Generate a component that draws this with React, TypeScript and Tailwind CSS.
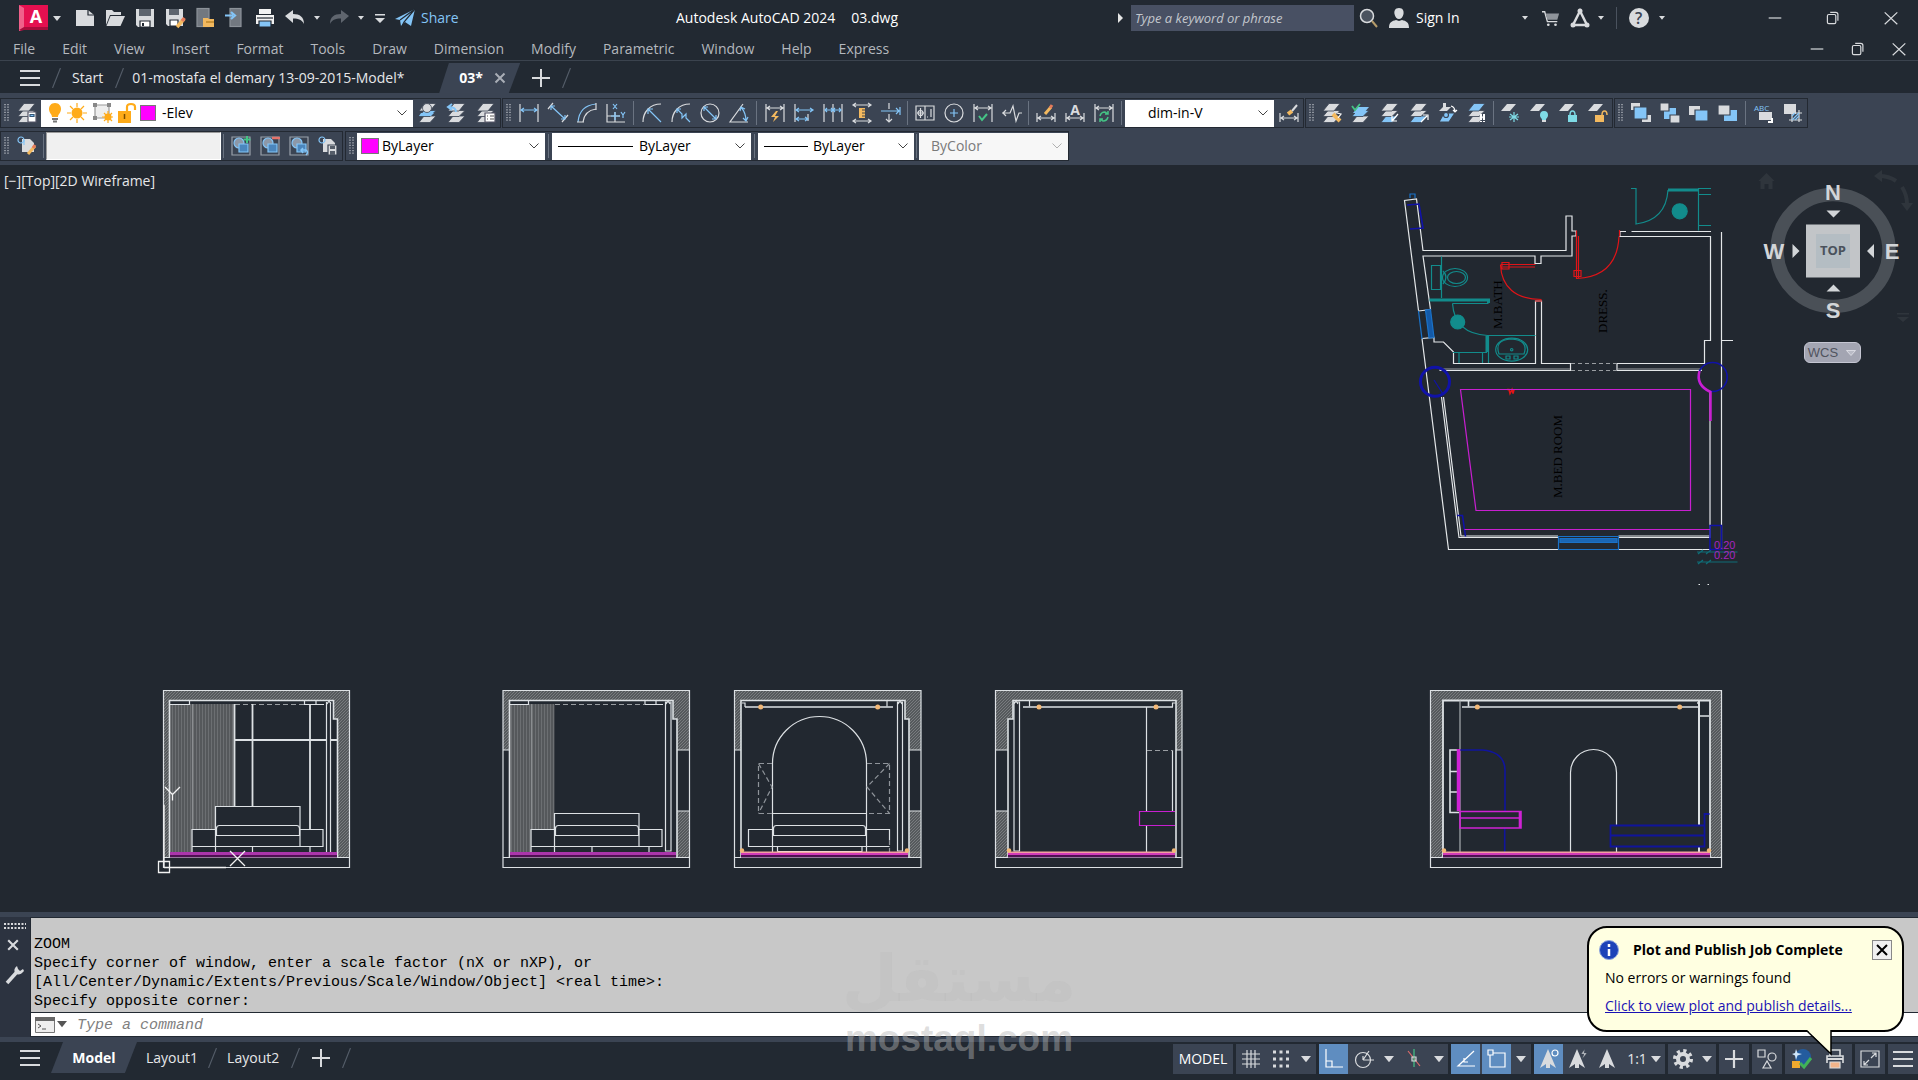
import type { ReactNode } from 'react';

const W = '#d9dbde';
const B = '#84c5f7';
const Y = '#f3b95f';
const G = '#45c486';
const C = '#7fdbe6';

interface IconProps {
  children: ReactNode;
  className?: string;
}

function Icon({ children, className = 'h-5 w-5' }: IconProps) {
  return (
    <svg
      viewBox="0 0 20 20"
      className={`${className} shrink-0 overflow-visible`}
      fill="none"
      stroke={W}
      strokeWidth="1.2"
      aria-hidden="true"
    >
      {children}
    </svg>
  );
}

function Stack({ a = W, b = W, c = W }: { a?: string; b?: string; c?: string }) {
  return (
    <g stroke="#3b4453" strokeWidth="0.8">
      <path d="M6 13h12l-6 6.500H1z" fill={c} />
      <path d="M6 7.500h12l-6 6H1z" fill={b} />
      <path d="M7 .5h11l-6 7.500H1z" fill={a} />
    </g>
  );
}

function Caret({ className = 'w-2' }: { className?: string }) {
  return (
    <svg viewBox="0 0 8 5" className={`${className} shrink-0`} aria-hidden="true">
      <path d="M0 0h8L4 5z" fill="#d9dbde" />
    </svg>
  );
}

function Chevron({ color = '#444' }: { color?: string }) {
  return (
    <svg viewBox="0 0 10 6" className="pointer-events-none mr-1.5 w-2.5 shrink-0" fill="none" stroke={color}>
      <path d="M.5 .5 5 5 9.500.5" />
    </svg>
  );
}

function Grip() {
  return (
    <svg viewBox="0 0 6 18" className="mr-0.5 ml-[3px] h-[18px] w-1.5 shrink-0" aria-hidden="true">
      <path
        d="M1 0v18M4 0v18"
        stroke="#c3c7cd"
        strokeWidth="1.2"
        strokeDasharray="1.2 1.4"
      />
    </svg>
  );
}

function Separator({ className = 'mx-px' }: { className?: string }) {
  return <span className={`${className} h-6 w-px shrink-0 bg-[#6a7381]`} />;
}

interface ToolProps {
  label: string;
  children: ReactNode;
}

function Tool({ label, children }: ToolProps) {
  return (
    <button aria-label={label} className="flex h-[26px] w-[29px] shrink-0 items-center justify-center">
      <Icon>{children}</Icon>
    </button>
  );
}

function Panel({ children }: { children: ReactNode }) {
  return (
    <div className="flex h-[30px] shrink-0 items-center border border-[#232932] bg-[#3b4453]">{children}</div>
  );
}

// linear dimension with arrows, shared by several dimension tools
function DimBase() {
  return <path d="M1 1v18M19 1v18M2 5h16M5 3 2 5l3 2M15 3l3 2-3 2" />;
}

function TitleBar() {
  return (
    <header className="flex h-9 items-center">
      <div className="flex w-[456px] shrink-0 items-center pl-[19px]">
        <button aria-label="Application menu" className="flex items-center gap-1">
          <svg viewBox="0 0 30 26" className="h-[26px] w-[30px]">
            <path d="M0 0h29v25H5L0 26z" fill="#e51050" />
            <path d="M0 0 5 3v20l-5 3z" fill="#f0608a" />
            <path d="M5 22h24v3H0z" fill="#a80c3c" />
            <text
              x="17"
              y="18"
              textAnchor="middle"
              fill="#fff"
              className="font-['Open_Sans',sans-serif] text-[18px] font-bold"
            >
              A
            </text>
          </svg>
          <Caret className="w-2" />
        </button>
        <div className="ml-[9px] flex items-center">
          <TitleTool label="New">
            <path d="M1 2h12l6 5v11H1z" fill={W} stroke="none" />
            <path d="M13 2v5h6" stroke="#222932" />
          </TitleTool>
          <TitleTool label="Open">
            <path d="M1 2h6l2 2h7v3H5L1 17z" fill={W} stroke="none" />
            <path d="M5.500 8H20l-4.500 10H1.500z" fill={W} stroke="none" />
          </TitleTool>
          <TitleTool label="Save">
            <path d="M1 1h18v18H3l-2-2z" fill={W} stroke="none" />
            <path d="M4 1h12v7H4z" fill="#5d646e" stroke="none" />
            <path d="M5 13h10v6H5z" fill="#fff" stroke="#222932" />
            <path d="M8 15v3" stroke="#222932" strokeWidth="2" />
          </TitleTool>
          <TitleTool label="Save as">
            <path d="M1 1h17v17H3l-2-2z" fill={W} stroke="none" />
            <path d="M4 1h10v6H4z" fill="#5d646e" stroke="none" />
            <path d="M5 12h8v6H5z" fill="#fff" stroke="#222932" />
            <path d="m12 19 7-8" stroke={Y} strokeWidth="3.500" />
            <path d="m17 13 2.500-3" stroke="#e57b5b" strokeWidth="3.500" />
          </TitleTool>
          <TitleTool label="Open from mobile">
            <rect x="2" y="0.500" width="12" height="18" fill="#727880" stroke="#8c9299" />
            <path d="M8 10h5l1 1h5v8H8z" fill={Y} stroke="none" />
            <path d="M11 14h8" stroke="#b27b1c" />
          </TitleTool>
          <TitleTool label="Save to mobile">
            <rect x="5" y="0.500" width="11" height="18" fill="#727880" stroke="#8c9299" />
            <path d="M0 7.500h8M6 4l4 3.500L6 11" stroke={B} strokeWidth="2.200" />
          </TitleTool>
          <TitleTool label="Plot">
            <path d="M4 1h12v5H4zM1 7h18v9H1z" fill="#f1f1f1" stroke="none" />
            <path d="M2 10h16" stroke="#222932" />
            <path d="M4 13h12v6H4z" fill={B} stroke="#222932" />
          </TitleTool>
          <TitleTool label="Undo">
            <path d="M0 8 8 2v4c7 0 11 3 11 10-2-4-5-5.500-11-5.500V15z" fill={W} stroke="none" />
          </TitleTool>
          <Caret className="mx-1 w-1.5" />
          <TitleTool label="Redo">
            <path d="M20 8 12 2v4C5 6 1 9 1 16c2-4 5-5.500 11-5.500V15z" fill="#5f656e" stroke="none" />
          </TitleTool>
          <Caret className="mx-1 w-1.5" />
          <button aria-label="Customize" className="ml-[7px]">
            <svg viewBox="0 0 10 9" className="w-2.5">
              <path d="M0 0h10v1.500H0zM0 4h10L5 9z" fill={W} />
            </svg>
          </button>
        </div>
        <button className="ml-2.5 flex items-center gap-1.5 text-[#84c5f7]">
          <Icon>
            <path d="M0 11 20 1l-4 17-6-4-4 4-1-6z" fill={B} stroke="none" />
            <path d="M5 12 20 1 9 14l-2 4" stroke="#222932" />
          </Icon>
          Share
        </button>
      </div>
      <h1 className="flex-1 text-center text-white">
        Autodesk AutoCAD 2024<span className="ml-4">03.dwg</span>
      </h1>
      <div className="flex w-[800px] shrink-0 items-center">
        <svg viewBox="0 0 5 10" className="mr-2 w-[5px]">
          <path d="M0 0l5 5-5 5z" fill="#e5e5e5" />
        </svg>
        <input
          aria-label="Search"
          placeholder="Type a keyword or phrase"
          className="h-[26px] w-[223px] bg-[#485063] px-1 text-[13px] italic text-white outline-none placeholder:text-[#c3c7cd]"
        />
        <button aria-label="Search" className="ml-[5px]">
          <Icon>
            <circle cx="8" cy="8" r="6.500" fill="#4b535f" strokeWidth="1.500" />
            <path d="m13 13 5 6" stroke="#b59b6a" strokeWidth="2" />
          </Icon>
        </button>
        <button className="ml-2.5 flex items-center gap-[7px] text-white">
          <Icon>
            <path
              d="M10 0c4 0 5 3 4.500 6S12 11 10 11 6 9 5.500 6 6 0 10 0zM0 20c0-6 3-7 7-8l3 1 3-1c4 1 7 2 7 8z"
              fill={W}
              stroke="none"
            />
          </Icon>
          Sign In
        </button>
        <button aria-label="Account menu" className="ml-[62px]">
          <Caret className="w-1.5" />
        </button>
        <button aria-label="App store" className="ml-3.5">
          <Icon className="h-[18px] w-[18px]">
            <path d="M0 3h3l3 11h11" strokeWidth="1.500" />
            <path d="M4 5h15l-2 7H6z" fill="#8f949b" stroke="none" />
            <circle cx="7" cy="17.500" r="1.500" fill={W} stroke="none" />
            <circle cx="15" cy="17.500" r="1.500" fill={W} stroke="none" />
          </Icon>
        </button>
        <button aria-label="Autodesk connect" className="ml-2.5 flex items-center gap-2">
          <Icon>
            <path d="M10 3 3 17h14z" strokeWidth="2.500" />
            <circle cx="10" cy="3" r="2.500" fill={W} stroke="none" />
            <circle cx="3" cy="17" r="2.500" fill={W} stroke="none" />
            <circle cx="17" cy="17" r="2.500" fill={W} stroke="none" />
          </Icon>
          <Caret className="w-1.5" />
        </button>
        <span className="ml-3 h-[22px] w-px bg-[#4a525e]" />
        <button aria-label="Help" className="ml-3 flex items-center gap-2.5">
          <span className="flex h-5 w-5 items-center justify-center rounded-full bg-[#d9dbde] text-[16px] leading-5 font-semibold text-[#3b4453]">
            ?
          </span>
          <Caret className="w-1.5" />
        </button>
        <WindowControls className="mr-5 gap-11" />
      </div>
    </header>
  );
}

function TitleTool({ label, children }: ToolProps) {
  return (
    <button aria-label={label} className="flex h-6 w-[30px] shrink-0 items-center justify-center">
      <Icon>{children}</Icon>
    </button>
  );
}

function WindowControls({ className }: { className: string }) {
  return (
    <div className={`ml-auto flex items-center ${className}`}>
      <button aria-label="Minimize">
        <Icon className="h-3.5 w-3.5">
          <path d="M1 10h18" strokeWidth="1.700" />
        </Icon>
      </button>
      <button aria-label="Restore">
        <Icon className="h-3.5 w-3.5">
          <rect x="2" y="5" width="12" height="13" rx="2" strokeWidth="1.700" />
          <path d="M6 2h8q3 0 3 3v9" strokeWidth="1.700" />
        </Icon>
      </button>
      <button aria-label="Close">
        <Icon className="h-3.5 w-3.5">
          <path d="m1 2 18 17M19 2 1 19" strokeWidth="1.700" />
        </Icon>
      </button>
    </div>
  );
}

const menus = [
  'File', 'Edit', 'View', 'Insert', 'Format', 'Tools', 'Draw',
  'Dimension', 'Modify', 'Parametric', 'Window', 'Help', 'Express',
];

function MenuBar() {
  return (
    <nav className="flex h-[25px] items-center border-b border-[#3b434e] pt-0.5 pl-[13px]">
      <div className="flex gap-[27px] text-[#b4b8be]">
        {menus.map((menu) => (
          <button key={menu}>{menu}</button>
        ))}
      </div>
      <WindowControls className="mr-3 gap-[27px]" />
    </nav>
  );
}

function Slash() {
  return (
    <svg viewBox="0 0 9 20" className="h-5 w-[9px] shrink-0" stroke="#545c68" fill="none">
      <path d="M8.500 0 .5 20" strokeWidth="1.200" />
    </svg>
  );
}

function Hamburger() {
  return (
    <Icon>
      <path d="M0 3h20M0 10h20M0 17h20" strokeWidth="2" />
    </Icon>
  );
}

function Plus() {
  return (
    <Icon className="h-[18px] w-[18px]">
      <path d="M10 0v20M0 10h20" strokeWidth="2.200" />
    </Icon>
  );
}

function DocumentTabs() {
  return (
    <div className="flex h-8 items-center pt-0.5 pl-5 text-[#e6e7e9]">
      <button aria-label="File tabs menu">
        <Hamburger />
      </button>
      <div className="ml-3">
        <Slash />
      </div>
      <button className="ml-[11px]">Start</button>
      <div className="ml-3">
        <Slash />
      </div>
      <button className="ml-2 w-[307px] text-left whitespace-nowrap">01-mostafa el demary 13-09-2015-Model*</button>
      <div className="flex h-[30px] w-[81px] items-center gap-3 bg-[#3b4453] pl-5 font-bold text-white [clip-path:polygon(12%_0,100%_0,86%_100%,0_100%)]">
        <button>03*</button>
        <button aria-label="Close tab">
          <Icon className="h-2.5 w-2.5">
            <path d="m1 1 18 18M19 1 1 19" stroke="#a9aeb6" strokeWidth="4" />
          </Icon>
        </button>
      </div>
      <button aria-label="New tab" className="mx-3">
        <Plus />
      </button>
      <Slash />
    </div>
  );
}

interface DropdownProps {
  label: string;
  value: string;
  className: string;
  children?: ReactNode;
  disabled?: boolean;
}

function Dropdown({ label, value, className, children, disabled }: DropdownProps) {
  return (
    <div
      className={`flex h-[27px] shrink-0 items-center text-black ${disabled ? 'bg-[#f7f7f7]' : 'bg-white'} ${className}`}
    >
      {children}
      <select
        aria-label={label}
        disabled={disabled}
        className={`h-full min-w-0 flex-1 appearance-none outline-none ${disabled ? 'text-[#7a7a7a]' : ''}`}
      >
        <option>{value}</option>
      </select>
      <Chevron color={disabled ? '#b0b0b0' : '#444'} />
    </div>
  );
}

function LayerStatus() {
  return (
    <div className="flex items-center">
      <Icon className="mr-0.5 h-5 w-5">
        <path d="M10 0c4 0 6 3 6 6 0 4-3 5-3 8H7c0-3-3-4-3-8 0-3 2-6 6-6z" fill="#ffab19" stroke="none" />
        <path d="M7 16h6M8 18.500h4" stroke="#777" strokeWidth="2" />
      </Icon>
      <Icon className="mr-1.5 h-5 w-5">
        <circle cx="10" cy="10" r="5.500" fill="#ffab19" stroke="none" />
        <path d="M10 0v4M10 16v4M0 10h4M16 10h4M3 3l3 3M14 14l3 3M17 3l-3 3M6 14l-3 3" stroke="#ffab19" />
      </Icon>
      <Icon className="mr-1 h-5 w-5">
        <path d="M2 2h14v13H2z" fill="#eee" stroke="#999" />
        <path d="M0 0h4v4H0zM14 0h4v4h-4zM0 13h4v4H0z" fill="#888" stroke="none" />
        <circle cx="15" cy="14" r="3.500" fill="#ffab19" stroke="none" />
        <path d="M15 8v12M9 14h11M11 10l8 8M19 10l-8 8" stroke="#ffab19" />
      </Icon>
      <Icon className="mr-[3px] h-5 w-5">
        <path d="M1 8h13v12H1z" fill="#ffab19" stroke="none" />
        <path d="M10 8V4q0-3 4-3t4 3v3" stroke="#ffab19" strokeWidth="2.200" />
        <path d="M7.500 11v5" stroke="#7a4d00" strokeWidth="1.500" />
      </Icon>
      <span className="mr-1.5 h-4 w-4 border border-[#777] bg-[#ff00ff]" />
    </div>
  );
}

function DimensionTools() {
  return (
    <>
      <Tool label="Linear">
        <path d="M1 1v18M19 1v18" />
        <path d="M2 7h16M5 5 2 7l3 2M15 5l3 2-3 2" stroke={B} />
      </Tool>
      <Tool label="Aligned">
        <path d="M5 0 0 6M20 12l-6 7" />
        <path d="m3 3 14 13M3 7V3h4M17 12v4h-4" stroke={B} />
      </Tool>
      <Tool label="Arc length">
        <path d="M1 19C2 8 8 2 19 1" stroke={B} />
        <path d="M6 19C7 12 11 7 19 6M0 19h7M19 0v7" />
      </Tool>
      <Tool label="Ordinate">
        <path d="M1 1v18h18M9 9v10M1 13h13" />
        <path d="m7 1 4 5M11 1 7 6M15 9l2 3 2-3M17 12v3M9 9v8M5 13h9" stroke={B} />
      </Tool>
      <Separator className="mx-[3px]" />
      <Tool label="Radius">
        <path d="M1 19C1 9 8 1 19 1" />
        <path d="M6 6 19 19M6 11V6h5" stroke={B} />
      </Tool>
      <Tool label="Jogged">
        <path d="M1 19C1 9 8 1 19 1" />
        <path d="m6 6 5 5v4l4-4v4l4 4M6 10V6h4" stroke={B} />
      </Tool>
      <Tool label="Diameter">
        <circle cx="10" cy="10" r="9" />
        <path d="m4 4 12 12M4 8V4h4M16 12v4h-4" stroke={B} />
      </Tool>
      <Tool label="Angular">
        <path d="M14 1 1 19h18" />
        <path d="M12 4q5 6 5 14M11 8l1-4 4 2M14 15l3 3 2-4" stroke={B} />
      </Tool>
      <Separator className="mx-[3px]" />
      <Tool label="Quick dimension">
        <DimBase />
        <path d="M11 8 6 14h4l-2 5 6-6h-4l3-5z" fill={Y} stroke="none" />
      </Tool>
      <Tool label="Baseline">
        <path d="M1 1v18M14 11v7" />
        <path d="M2 7h17M2 16h12M5 5 2 7l3 2M16 5l3 2-3 2M5 14l-3 2 3 2M11 14l3 2-3 2" stroke={B} />
      </Tool>
      <Tool label="Continue">
        <path d="M1 1v18M10 1v18M19 1v18" />
        <path d="M2 7h16M4 5 2 7l2 2M16 5l2 2-2 2M8 5l4 4M12 5 8 9" stroke={B} />
      </Tool>
      <Tool label="Dimension space">
        <path d="M1 2h18M1 18h18M4 0 1 2l3 2M16 0l3 2-3 2M4 16l-3 2 3 2M16 16l3 2-3 2" />
        <path d="M7 5h6v10H7z" fill={Y} stroke="none" />
        <path d="M10 7h3M10 10h3M10 13h3" stroke="#444" />
      </Tool>
      <Tool label="Dimension break">
        <path d="M8 0v6M8 11v8M5 16l3 3 3-3" />
        <path d="M0 8h18M15 5l3 3-3 3M19 4v8" stroke={B} />
      </Tool>
      <Separator className="mx-0.5" />
      <Tool label="Tolerance">
        <path d="M1 3h18v14H1zM10 3v14M2 10h7M5.500 5v10M12 14h1M16 6v8" />
        <circle cx="5.500" cy="10" r="2.500" />
      </Tool>
      <Tool label="Center mark">
        <circle cx="10" cy="10" r="9" />
        <path d="M10 6v8M6 10h8" stroke={B} />
      </Tool>
      <Tool label="Inspection">
        <DimBase />
        <path d="m6 13 3 4 5-6" stroke={G} strokeWidth="2" />
      </Tool>
      <Tool label="Jogged linear">
        <path d="M0 10h8l3-7 3 15 3-8h3M4 7l-3 3 3 3" />
      </Tool>
      <Separator className="mx-0.5" />
      <Tool label="Dimension edit">
        <path d="M1 10v9M19 10v9M2 15h16M5 13l-3 2 3 2M15 13l3 2-3 2" />
        <path d="m9 11 6-7" stroke={Y} strokeWidth="3" />
        <path d="m14 5 2-3" stroke="#e57b5b" strokeWidth="3" />
      </Tool>
      <Tool label="Dimension text edit">
        <path d="M1 10v9M19 10v9M2 15h16M5 13l-3 2 3 2M15 13l3 2-3 2" />
        <text x="10" y="12" textAnchor="middle" fill={W} stroke="none" className="text-[14px] font-bold">
          A
        </text>
      </Tool>
      <Tool label="Dimension update">
        <DimBase />
        <path d="M6 13q1-4 5-4l3 2M14 14q-1 4-5 4l-3-2M14 8v3h-3M6 19v-3h3" stroke={G} strokeWidth="1.500" />
      </Tool>
      <Separator className="mx-[3px]" />
    </>
  );
}

function Sheet() {
  return <path d="M6 1h9l-6 7H0z" fill={W} stroke="none" />;
}

function LayerTools() {
  return (
    <>
      <Tool label="Match layer">
        <Stack />
        <path d="m11 11 7 7" stroke={Y} strokeWidth="4" />
        <path d="m15 10 4 1-3 4" stroke="#fff" />
      </Tool>
      <Tool label="Make current">
        <Stack a="#3b4453" b={B} />
        <path d="M7 4h11l-5 6H2z" fill={B} stroke="none" />
        <path d="m1 3 3 4 5-6" stroke={G} strokeWidth="1.800" />
      </Tool>
      <Tool label="Previous state">
        <Stack c={B} />
        <path d="m18 11-6 7M12 13v5h5" stroke="#fff" />
      </Tool>
      <Tool label="Copy to layer">
        <Stack c={B} />
        <path d="m12 19 6-6M14 12h5v5" stroke="#fff" />
      </Tool>
      <Tool label="Layer walk">
        <path d="M5 4h8l-4 4H1zM5 0h3v4H5z" fill={W} stroke="none" />
        <path d="M6 10h11l-6 9H1z" fill={B} stroke="#3b4453" />
        <circle cx="8" cy="12" r="2.500" fill={B} stroke="#3b4453" />
        <path d="M13 3q4 1 4 6M15 7l2 2 2-2" stroke="#fff" />
      </Tool>
      <Tool label="Isolate">
        <Stack a={B} />
        <path d="M14 11v6M17 11v6M14 18v1M17 18v1" stroke="#fff" strokeWidth="2" />
      </Tool>
      <Separator className="mx-0.5" />
      <Tool label="Freeze">
        <Sheet />
        <path d="M13 9v10M9 11l8 6M17 11l-8 6M8 14h10" stroke={C} />
      </Tool>
      <Tool label="Layer off">
        <Sheet />
        <path d="M14 8c3 0 4 2 4 4 0 3-2 3-2 5h-4c0-2-2-2-2-5 0-2 1-4 4-4z" fill={C} stroke="none" />
        <path d="M12 18h4" strokeWidth="2" />
      </Tool>
      <Tool label="Lock">
        <Sheet />
        <path d="M9 12h9v7H9z" fill={C} stroke="none" />
        <path d="M11 12q0-4 2.500-4t2.500 4" stroke={C} strokeWidth="1.500" />
      </Tool>
      <Tool label="Unlock">
        <Sheet />
        <path d="M7 12h9v7H7z" fill={Y} stroke="none" />
        <path d="M14 12q0-4 2.500-4t2.500 4" stroke={Y} strokeWidth="1.500" />
      </Tool>
    </>
  );
}

function DrawOrderTools() {
  return (
    <>
      <Tool label="Bring to front">
        <path d="M0 0h9v7H0zM11 12h9v7h-9z" fill={W} stroke="none" />
        <path d="M3 4h13v12H3z" fill={B} stroke="#3b4453" />
      </Tool>
      <Tool label="Send to back">
        <path d="M4 5h12v11H4z" fill={B} stroke="none" />
        <path d="M0 0h9v8H0zM10 12h10v8H10z" fill={W} stroke="#3b4453" />
      </Tool>
      <Tool label="Bring above">
        <path d="M0 3h11v9H0z" fill={W} stroke="none" />
        <path d="M6 7h13v11H6z" fill={B} stroke="#3b4453" />
      </Tool>
      <Tool label="Send under">
        <path d="M6 7h13v11H6z" fill={B} stroke="none" />
        <path d="M0 2h12v10H0z" fill={W} stroke="#3b4453" />
      </Tool>
      <Separator className="mx-[3px]" />
      <Tool label="Text to front">
        <path d="M5 9h13v8H5z" fill={W} stroke="none" />
        <text x="0" y="8" fill={B} stroke="none" className="text-[8px]">
          ABC
        </text>
        <path d="M14 19h4v-4" stroke="#fff" strokeWidth="2" />
      </Tool>
      <Tool label="Hatch to back">
        <path d="M1 1h12v10H1z" fill={W} stroke="none" />
        <path d="M9 7v12M16 7v12M6 10h13M6 17h13" />
        <path d="m9 17 7-7M9 13l3-3M12 17l4-4" stroke={B} />
      </Tool>
    </>
  );
}

function Swatch() {
  return <span className="ml-1 h-4 w-[18px] border border-[#777] bg-[#ff00ff]" />;
}

// group icon used by the reference-edit toolbar
function Shapes({ children }: { children?: ReactNode }) {
  return (
    <>
      <path d="M1 1h18v18H1z" stroke="#9aa1ab" />
      <circle cx="8" cy="7" r="5" fill="#8d98a8" stroke={B} />
      <path d="M8 8h9v8H8z" fill="#4b86bd" stroke={B} />
      {children}
    </>
  );
}

function Toolbars() {
  return (
    <div className="flex h-[72px] flex-col gap-[3px] bg-[#3b4453] pt-[5px]">
      <div className="flex gap-px">
        <Panel>
          <Grip />
          <Tool label="Layer properties">
            <Stack />
            <path d="M11 9h8v10h-8z" fill="#fff" stroke="#556" />
            <path d="M13 11.500h4v2h-4z" fill={B} stroke="#357" />
          </Tool>
          <Dropdown label="Layer" value="-Elev" className="w-[372px] pl-1">
            <LayerStatus />
          </Dropdown>
          <Tool label="Make layer current">
            <Stack b={B} />
            <path d="M3 10h13l-3 3H1z" fill={B} stroke="none" />
            <circle cx="9" cy="5" r="4.500" fill={W} stroke="#3b4453" strokeWidth="0.800" />
          </Tool>
          <Tool label="Layer previous">
            <Stack />
            <path d="M9 9q0-5-7-5M5 1 1 4l4 3" stroke={B} strokeWidth="2" />
          </Tool>
          <Tool label="Layer states">
            <Stack />
            <path d="M9 10h10v9H9z" fill="#fff" stroke="#556" />
            <path d="M11 13h1M14 13h4M11 16h1M14 16h4" stroke="#555" />
          </Tool>
        </Panel>
        <Panel>
          <Grip />
          <DimensionTools />
          <Dropdown label="Dimension style" value="dim-in-V" className="w-[149px] pl-[23px]" />
          <Tool label="Dimension style manager">
            <path d="M1 10v9M19 10v9M2 15h16M5 13l-3 2 3 2M15 13l3 2-3 2" />
            <path d="m9 11 4-3" stroke={Y} strokeWidth="4" />
            <path d="m13 8 5-6" strokeWidth="2" />
          </Tool>
        </Panel>
        <Panel>
          <Grip />
          <LayerTools />
        </Panel>
        <Panel>
          <Grip />
          <DrawOrderTools />
        </Panel>
      </div>
      <div className="flex gap-0.5">
        <Panel>
          <Grip />
          <Tool label="Edit reference">
            <path d="M5 3h8l4 4v9H5z" fill={W} stroke="none" />
            <circle cx="4" cy="4" r="3" stroke={B} />
            <path d="M7 4v5" stroke={B} />
            <path d="m11 18 7-8" stroke={Y} strokeWidth="3" />
            <path d="m16 12 2-3" stroke="#e57b5b" strokeWidth="3" />
          </Tool>
          <Separator className="mx-0.5" />
          <input
            aria-label="Reference name"
            className="h-7 w-[175px] border border-[#9a9a9a] border-r-white border-b-white bg-[#f0f0f0] px-1 text-black"
          />
          <Separator className="mx-0.5" />
          <Tool label="Add to working set">
            <Shapes>
              <path d="M16 0v7M12.500 3.500h7" stroke={G} strokeWidth="2" />
            </Shapes>
          </Tool>
          <Tool label="Remove from working set">
            <Shapes>
              <path d="M12 2h8" stroke="#e5736b" strokeWidth="2.500" />
            </Shapes>
          </Tool>
          <Tool label="Discard changes">
            <Shapes>
              <path d="M12 14h5q3 2 0 5M14 12l-2 2 2 3" stroke={B} strokeWidth="1.500" />
            </Shapes>
          </Tool>
          <Tool label="Save changes">
            <path d="M5 3h8l4 4v9H5z" fill={W} stroke="none" />
            <circle cx="4" cy="4" r="3" stroke={B} />
            <path d="M10 9h9v10h-9z" fill={W} stroke="#3b4453" />
            <path d="M12 10h5v3h-5zM12 15h5v4h-5z" fill="#555d69" stroke="none" />
          </Tool>
        </Panel>
        <Panel>
          <Grip />
          <Dropdown label="Color" value="ByLayer" className="w-[188px] gap-[3px]">
            <Swatch />
          </Dropdown>
          <Separator className="mx-[3px]" />
          <Dropdown label="Linetype" value="ByLayer" className="w-[199px] gap-1.5">
            <span className="ml-1.5 h-px w-[75px] bg-black" />
          </Dropdown>
          <Separator className="mx-[3px]" />
          <Dropdown label="Lineweight" value="ByLayer" className="w-[156px] gap-[5px]">
            <span className="ml-1.5 h-px w-11 bg-black" />
          </Dropdown>
          <Separator className="mx-0.5" />
          <Dropdown label="Plot style" value="ByColor" className="w-[149px] pl-3" disabled />
        </Panel>
      </div>
    </div>
  );
}

const FLOOR = 857.5;

function Bed({ x, top }: { x: number; top: number }) {
  return (
    <>
      <path d={`M${x} 853V${top}h84.500V846`} />
      <path d={`M${x + 1} 835.500v-7q0-3 3-3h77q3 0 3 3v7z`} />
      <path d={`M${x} 829.500H${x - 23.500}V853M${x - 23.500} 846.500h131V829.500h-23`} />
    </>
  );
}

function Lights({ x1, x2, a, b }: { x1: number; x2: number; a: number; b: number }) {
  return (
    <>
      <path d={`M${x1} 707H${x2}`} strokeWidth="1.600" />
      <circle cx={a} cy="707" r="2.500" fill="#f2b877" stroke="none" />
      <circle cx={b} cy="707" r="2.500" fill="#f2b877" stroke="none" />
    </>
  );
}

function FloorStrip({ x1, x2, warm }: { x1: number; x2: number; warm?: boolean }) {
  return (
    <g stroke="none">
      <rect x={x1} y="854" width={x2 - x1} height="3.500" fill="#4e1052" />
      <rect x={x1} y="852" width={x2 - x1} height="3" fill={warm ? '#d23bb8' : '#ab35ab'} />
      {warm && (
        <>
          <rect x={x1} y="851.500" width={x2 - x1} height="1.500" fill="#f2a0a0" />
          <circle cx={x1 + 1} cy="850.500" r="2.200" fill="#f2b877" />
          <circle cx={x2 - 1} cy="850.500" r="2.200" fill="#f2b877" />
        </>
      )}
    </g>
  );
}

function Box({ x1, x2 }: { x1: number; x2: number }) {
  return <path d={`M${x1} 690.500H${x2}V867.500H${x1}zM${x1} ${FLOOR}H${x2}`} />;
}

function Elevations() {
  return (
    <g stroke="#dde1e4" fill="none" strokeWidth="1.200">
      {/* bedroom, panelled wall */}
      <path d="M163.500 690.500h186v167h-12V719h-4v-18.500H169.500v157h-6z" fill="url(#hatch)" stroke="none" />
      <path d="M170 704h64.500v102H216v23.500h-23.500V853H170z" fill="url(#slats)" stroke="none" />
      <path d="M192.500 704v126" stroke="#8a8d90" />
      <Box x1={163.5} x2={349.5} />
      <path d="M169.500 857.500v-157h164V719h4v138.500" strokeWidth="1.600" />
      <path d="M170 704.500h19.500v-4M304.500 700.500v4H324M316 700.500v4" />
      <path d="M235 704.500h70" strokeDasharray="5 3" stroke="#9a9ea2" />
      <path d="M234.500 704v102M252.500 704v102M310 704v125M234.500 740H326M331 740h6" strokeWidth="1.800" />
      <path d="M326.500 702v150M330.500 702v150M327 704l2-3 2 3M252.500 846v7M310 846v7" />
      <Bed x={215.5} top={806.5} />
      <FloorStrip x1={170} x2={337} />

      {/* bedroom, bed wall */}
      <path
        d="M503 690.500h186.500V750H677V719h-4v-18.500H509.500V750H503zM677 811h12.500v46.500H677z"
        fill="url(#hatch)"
        stroke="none"
      />
      <path d="M510 704h44.500v125.500H531.500V853H510z" fill="url(#slats)" stroke="none" />
      <path d="M531.500 704v126" stroke="#8a8d90" />
      <Box x1={503} x2={689.5} />
      <path d="M509.500 857.500v-157H673V719h4v138.500" strokeWidth="1.600" />
      <path d="M503 750h6M677 750h13M677 811h13M510 704.500h18.500v-4M645 700.500v4h18M656 700.500v4" />
      <path d="M555 704.500h90" strokeDasharray="5 3" stroke="#9a9ea2" />
      <path d="M665.500 702v149h5.500V702zM666 704l2-3 2 3M592 846v7M649 846v7" />
      <Bed x={554.5} top={813.5} />
      <FloorStrip x1={510} x2={676} />

      {/* bedroom, arched headboard */}
      <path
        d="M734.500 690.500H921V750h-12V719h-4v-18.500H741V750h-6.500zM909 811h12v46.500h-12z"
        fill="url(#hatch)"
        stroke="none"
      />
      <Box x1={734.5} x2={921} />
      <path d="M741 857.500v-157h164V719h4v138.500" strokeWidth="1.600" />
      <path d="M734.500 750h6.500M909 750h12M909 811h12M742 703h3v4M887 700.500v6M897.500 702v149h5V702zM898 704l2-3 2 3" />
      <Lights x1={745} x2={893} a={760.7} b={877.7} />
      <path d="M772.500 852V763.500a47 47 0 0 1 94 0V852M772.500 813.500h94" />
      <path d="M773.500 835.500v-7q0-3 3-3h86q3 0 3 3v7z" />
      <path d="M772.500 829.500h-24v17h141M866.500 829.500h23V840M777.500 846v7M862 846v7" />
      <path
        d="M772 763.500h-13.500v50H772M758.500 763.500 772 787l-13.500 26.500M867 763.500h22.500v50H867M889.500 763.500 867 787l22.500 26.500M889.500 840v13"
        stroke="#8f949a"
        strokeDasharray="5 3"
      />
      <FloorStrip x1={741} x2={908} warm />
      <path d="M778 851.500h84" stroke="#f2d0cc" />

      {/* bedroom, tv wall */}
      <path
        d="M995.500 690.500H1182V750h-6v-49.500h-163V719h-5v31h-12.500zM995.500 811h12.500v46.500h-12.500z"
        fill="url(#hatch)"
        stroke="none"
      />
      <Box x1={995.5} x2={1182} />
      <path d="M1008 857.500V719h5v-18.500h163v157" strokeWidth="1.600" />
      <path d="M995.500 750h12.500M995.500 811h12.500M1176 750h6M1014 702v149h5.500V702zM1014 704l2-3 2 3M1029.500 700.500v6M1172.500 707v-4h3" />
      <Lights x1={1023} x2={1173} a={1039} b={1156} />
      <path d="M1146.500 707v104M1146.500 825.500V852M1172.500 750v61" />
      <path d="M1147 750.500h26" stroke="#9a9ea2" strokeDasharray="5 3" />
      <path d="M1175 811.500h-35.500v14H1175" stroke="#c81fd0" />
      <FloorStrip x1={1008} x2={1175} warm />

      {/* long section */}
      <path d="M1430.500 690.500h291v167H1710v-157h-267v157h-12.500z" fill="url(#hatch)" stroke="none" />
      <Box x1={1430.5} x2={1721.5} />
      <path d="M1443 857.500v-157h267v157" strokeWidth="1.800" />
      <path d="M1460 700.500V852" stroke="#a9adb1" />
      <path d="M1468.500 700.500v6M1697 703h3M1699 716h10" strokeWidth="1.600" />
      <path d="M1699 700.500v125M1699 846.500v6" strokeWidth="2" />
      <Lights x1={1462} x2={1698} a={1477.3} b={1679.7} />
      <path d="M1459 750h-9v62.500h9M1450 771.500h9M1450 792h9" strokeWidth="1.600" />
      <path d="M1460 750h22.500q22 2 22.500 20v41M1504.700 828v25" stroke="#10149c" strokeWidth="1.600" />
      <path d="M1458.500 749v62" stroke="#cf22d4" strokeWidth="3.500" />
      <path d="M1460 811.500h61V828h-61zM1460 818h60M1519.500 812v16" stroke="#cf22d4" strokeWidth="1.600" />
      <path d="M1570.500 852v-79.500a23 23 0 0 1 46 0V825M1616.500 846v6" />
      <path d="M1610.500 825.500h94v21h-94zM1610.500 835.500h94M1704.500 846V814h5" stroke="#10149c" strokeWidth="1.800" />
      <FloorStrip x1={1443} x2={1710} warm />
    </g>
  );
}

function FloorPlan() {
  return (
    <g fill="none" strokeWidth="1.200" stroke="#e4e7e9">
      <path d="M1418.500 310.500 1404.500 200.500l12-1.500 6.500 51.500h143v-34.500h6v15h4v5h-4v20H1541v7.500h-6v-7.500h-112l7.500 53.500-12 1.500" />
      <path d="m1422 338.500 12-1v4.500h9.500l10 10v11.500h82V301h6v62.500h29v7h-131" />
      <path d="M1422 338.500 1448.500 549.500h273V232" />
      <path d="M1626 231.500h-6v5h90.500v104h-6v23H1617v7h85M1631.500 231.500H1711M1721.500 340.500H1733" />
      <path d="m1441.500 397 17.500 140.500h99.500M1443.500 397 1461 536h97M1618.500 537.500H1710V391M1618.500 536h91" />
      <path d="M1571 363.500h46M1571 370.500h46" strokeDasharray="4 3" stroke="#9a9ea2" />
      <path d="M1439 369h131M1617 369h85" stroke="#9a9ea2" />

      <g stroke="#1a72c8">
        <path d="m1418.500 311 3.500 28" />
        <path d="m1425.500 310 5-.5 3.500 28-5 .5z" fill="#145aa8" />
        <path d="M1558.500 536.500h60v13h-60z" />
        <path d="M1560 538.500h57v4h-57z" fill="#1a66b4" />
        <path d="M1410 198v-4h5v4" />
      </g>

      <g stroke="#e01418">
        <path d="M1576.500 230.500V279M1578.500 236V279M1574 270.500h7v6h-7zM1577 278.500q40-2 42-42M1619.500 230v6" />
        <path d="M1500.500 264.500h35M1503 267h32M1502 262.500h7v6.500h-7zM1500.500 265c1 22 15 34.500 41 34.500M1535 301h7" />
        <path d="M1507 389.500h2l1 4 2-4 1 4 1-4" strokeWidth="1.600" />
      </g>

      <g stroke="#128c8c">
        <path d="M1631 188.500h5V224q30-4 32-34" />
        <path d="M1668 190h30" strokeWidth="3" />
        <path d="M1698.500 188.500v42M1698 188.500h13M1698 194.500h13M1698 225.500h13" />
        <circle cx="1679.700" cy="211.300" r="7.500" fill="#128c8c" />
        <path d="M1441.500 256.500V298M1431.500 265.500h9v24h-9z" />
        <ellipse cx="1455" cy="277.500" rx="12.500" ry="9" />
        <ellipse cx="1456.500" cy="277.500" rx="9" ry="6" />
        <path d="M1443 271q6 6 0 13" />
        <path d="M1429.500 300h59v3" strokeWidth="3" />
        <path d="M1452.500 303.500h36M1452.500 303.500q2 30 35 32h48M1453 352.500h34M1459 352v11M1482.500 352v11M1488.500 336v27" />
        <path d="M1487 336v16" strokeWidth="3" />
        <circle cx="1457.700" cy="322" r="7" fill="#128c8c" />
        <ellipse cx="1511.700" cy="349.700" rx="16" ry="11.500" />
        <path d="M1499 354q-5-14 12-15 18 1 13 15zM1506 356h4v3h-4zM1514 356h4v3h-4z" />
        <circle cx="1511.700" cy="349.700" r="1.200" />
        <path d="M1697 552h40.500M1697 562h40.500M1698 554l5-4M1706 554l5-4M1698 564l5-4M1706 564l5-4" stroke="#0e6d77" />
      </g>

      <g stroke="#1012a8">
        <circle cx="1435" cy="381.700" r="14.500" strokeWidth="3" />
        <path d="m1434 380 9 14" />
        <circle cx="1712.700" cy="377" r="14.500" strokeWidth="1.600" />
        <path d="m1407 205 12-1 4 24-13 1M1457 515.500h5.500l3 21M1710 525.500h11.500v24H1710z" strokeWidth="1.600" />
      </g>

      <g stroke="#c81fd0">
        <path d="M1460.500 389.500h230v121H1476zM1464.500 529.500H1710" />
        <path d="M1699.500 371q-4 14 11 21v29" strokeWidth="2.500" />
      </g>

      <g fill="#a824c0" stroke="none" className="font-['Liberation_Sans',sans-serif] text-[11px]">
        <text x="1714" y="549">0.20</text>
        <text x="1714" y="559">0.20</text>
      </g>
      <g fill="#000" stroke="none" className="font-['Liberation_Serif',serif] text-[13px]">
        <text transform="translate(1502 329) rotate(-90)">M.BATH</text>
        <text transform="translate(1607 333) rotate(-90)">DRESS.</text>
        <text transform="translate(1562 498) rotate(-90)">M.BED ROOM</text>
      </g>
      <path d="M1698.500 584.500h1.500M1707.500 584.500h1.500" />
    </g>
  );
}

function UcsIcon() {
  return (
    <g fill="none" stroke="#f2f2f2" strokeWidth="1.300">
      <path d="M158.500 861.500h11v11h-11zM164 867V805M164 867.500h62" />
      <path d="m165 787 7.500 7.500 7.500-7.500M172.500 794.500v6M230 851l15 15M245 851l-15 15" />
    </g>
  );
}

function ViewCube() {
  return (
    <div className="absolute top-0 right-0 flex w-[178px] flex-col items-center">
      <svg viewBox="0 0 178 177" className="h-[177px] w-full" aria-label="View cube">
        <circle cx="93" cy="85.500" r="56" fill="none" stroke="#4a5057" strokeWidth="13.500" />
        <rect x="66" y="59.500" width="54" height="53" fill="#c2c5c8" />
        <rect x="76" y="69" width="34" height="34" fill="#b4bdc3" />
        <g
          textAnchor="middle"
          fill="#d2d5d8"
          className="font-['Liberation_Sans',sans-serif] text-[22px] font-bold"
        >
          <text x="93" y="35">N</text>
          <text x="34" y="94">W</text>
          <text x="152" y="94">E</text>
          <text x="93" y="153">S</text>
        </g>
        <text
          x="93"
          y="90"
          textAnchor="middle"
          fill="#4a525c"
          className="font-['Open_Sans',sans-serif] text-[13px] font-bold"
        >
          TOP
        </text>
        <path d="M86.500 45.500h14l-7 7zM86.500 126.500h14l-7-7zM52.500 79v14l7-7zM134 79v14l-7-7z" fill="#d2d5d8" />
        <path d="m26.500 8 8 8h-2v8h-4v-5h-4v5h-4v-8h-2zM157 148h12v1.500h-12zM157 152h12l-6 5z" fill="#2f353c" />
        <path d="M139 11q10 0 17 5M162 22q5 8 5 17" fill="none" stroke="#2f353c" strokeWidth="4" />
        <path d="m134 11 8-6v12zM167 46l-6-8h12z" fill="#2f353c" />
      </svg>
      <button className="ml-1.5 flex h-[21px] w-[57px] items-center justify-center gap-2 rounded-md border border-[#c5c6d2] bg-[#a3a5b2] font-['Liberation_Sans',sans-serif] text-[13px] text-[#50535e]">
        WCS
        <svg viewBox="0 0 10 6" className="w-2.5">
          <path d="M.5 .5h9L5 5.500z" fill="#b9bbc6" stroke="#d9dae2" />
        </svg>
      </button>
    </div>
  );
}

function Canvas() {
  return (
    <main className="relative min-h-0 flex-1 overflow-hidden bg-[#222830]">
      <svg viewBox="0 165 1918 747" className="h-full w-full" aria-label="Drawing">
        <defs>
          <pattern id="hatch" width="3" height="3" patternUnits="userSpaceOnUse">
            <rect width="3" height="3" fill="#55595c" />
            <path d="M0 3 3 0" stroke="#7d8083" strokeWidth="0.900" />
          </pattern>
          <pattern id="slats" width="3" height="8" patternUnits="userSpaceOnUse">
            <rect width="3" height="8" fill="#55585b" />
            <path d="M1.500 0v8" stroke="#6c6f72" />
          </pattern>
        </defs>
        <Elevations />
        <FloorPlan />
        <UcsIcon />
      </svg>
      <p className="absolute top-1.5 left-1 text-[#e6e7e9]">[−][Top][2D Wireframe]</p>
      <ViewCube />
    </main>
  );
}

const history = [
  'ZOOM',
  'Specify corner of window, enter a scale factor (nX or nXP), or',
  '[All/Center/Dynamic/Extents/Previous/Scale/Window/Object] <real time>:',
  'Specify opposite corner:',
];

function CommandLine() {
  return (
    <section className="flex h-[130px] border-y-[5px] border-[#3b4453] bg-[#2c3340] font-['Liberation_Mono',monospace] text-[15px]">
      <div className="flex w-[30px] shrink-0 flex-col items-center gap-2.5 pt-1.5">
        <svg viewBox="0 0 22 6" className="w-[22px]">
          <path d="M0 1h22M0 5h22" stroke={W} strokeWidth="2" strokeDasharray="2 1.500" />
        </svg>
        <button aria-label="Close command line" className="-ml-1">
          <Icon className="h-3 w-3">
            <path d="m2 2 16 16M18 2 2 18" strokeWidth="3.500" />
          </Icon>
        </button>
        <button aria-label="Customize" className="mt-1">
          <Icon>
            <path d="m2 18 9-10" strokeWidth="3.500" />
            <path d="M12 1q-4 3-2 7 4 4 9-2l-1-2-3 2-2-2z" fill={W} stroke="none" />
          </Icon>
        </button>
      </div>
      <div className="flex flex-1 flex-col border border-r-0 border-[#222932]">
        <div className="flex-1 bg-[#c8c8c8] pt-[17px] pl-[3px] leading-[19px] text-black">
          {history.map((line) => (
            <p key={line}>{line}</p>
          ))}
        </div>
        <label className="flex h-6 items-center border-t border-[#222932] bg-white pl-1">
          <svg viewBox="0 0 20 16" className="h-4 w-5">
            <path d="M.5 .5h19v15H.5z" fill="#eee" stroke="#777" />
            <path d="M0 0h20v4H0z" fill="#666" />
            <path d="m3 7 3 2-3 2M7 12h4" fill="none" stroke="#555" />
          </svg>
          <svg viewBox="0 0 8 5" className="ml-0.5 w-2.5">
            <path d="M0 0h8L4 5z" fill="#555" />
          </svg>
          <input
            aria-label="Command"
            placeholder="Type a command"
            className="ml-2.5 h-full flex-1 pt-px italic text-black outline-none placeholder:text-[#808080]"
          />
        </label>
      </div>
    </section>
  );
}

interface StatusButtonProps {
  label: string;
  children: ReactNode;
  active?: boolean;
  className?: string;
}

function StatusButton({ label, children, active, className = 'w-[30px]' }: StatusButtonProps) {
  return (
    <button
      aria-label={label}
      className={`flex h-[30px] shrink-0 items-center justify-center ${active ? 'bg-[#5f8dc0]' : ''} ${className}`}
    >
      <Icon>{children}</Icon>
    </button>
  );
}

function StatusCaret({ label, className = 'w-5' }: { label: string; className?: string }) {
  return (
    <button aria-label={label} className={`flex shrink-0 justify-center ${className}`}>
      <Caret className="w-2.5" />
    </button>
  );
}

function Group({ children }: { children: ReactNode }) {
  return <div className="flex h-[30px] items-center bg-[#3b4453]">{children}</div>;
}

function Person() {
  return <path d="M9 0 1 19l6-4v4h4v-4l6 4z" fill={W} stroke="none" />;
}

function StatusBar() {
  return (
    <footer className="flex h-[38px] shrink-0 items-start pl-5 text-[#e6e7e9]">
      <div className="flex h-[31px] items-center">
        <button aria-label="Layout menu">
          <Hamburger />
        </button>
        <button className="ml-[11px] h-[31px] w-[86px] bg-[#3b4453] font-bold text-white [clip-path:polygon(14%_0,100%_0,86%_100%,0_100%)]">
          Model
        </button>
        <button className="ml-[9px]">Layout1</button>
        <div className="mx-2.5">
          <Slash />
        </div>
        <button>Layout2</button>
        <div className="mx-3">
          <Slash />
        </div>
        <button aria-label="New layout" className="mr-3">
          <Plus />
        </button>
        <Slash />
      </div>
      <div className="mt-0.5 ml-auto flex gap-[3px]">
        <button className="h-[30px] w-[60px] bg-[#3b4453] text-white">MODEL</button>
        <Group>
          <StatusButton label="Grid">
            <path d="M6 1v18M10 1v18M14 1v18M1 5h18M1 10h18M1 15h18" />
          </StatusButton>
          <StatusButton label="Snap">
            <path d="M2 3h16M2 10h16M2 17h16" strokeWidth="3" strokeDasharray="3 3.500" />
          </StatusButton>
          <StatusCaret label="Snap settings" />
        </Group>
        <Group>
          <StatusButton label="Ortho" active className="w-[29px]">
            <path d="M2 0v18h17M2 12h6v6" stroke="#fff" />
          </StatusButton>
          <StatusButton label="Polar" className="w-8">
            <circle cx="9" cy="11" r="7.500" />
            <path d="M9 11h11M9 11l6-9M9 11v-4" />
          </StatusButton>
          <StatusCaret label="Polar settings" className="w-[18px]" />
          <StatusButton label="Isodraft" className="w-8">
            <path d="m4 2 12 15" stroke="#e06a6a" />
            <path d="M10 0v18" stroke={G} />
            <path d="M8 8h4v4H8z" />
          </StatusButton>
          <StatusCaret label="Isodraft settings" className="w-[18px]" />
        </Group>
        <Group>
          <StatusButton label="Object snap tracking" active className="w-[29px]">
            <path d="M18 2 2 17h17M8 9v4h4" stroke="#fff" />
          </StatusButton>
          <span className="w-0.5" />
          <StatusButton label="Object snap" active className="w-[29px]">
            <path d="M3 4h15v14H3z" stroke="#fff" />
            <path d="M1 1h5v5H1z" fill="#5f8dc0" stroke="#fff" />
          </StatusButton>
          <StatusCaret label="Object snap settings" />
        </Group>
        <Group>
          <StatusButton label="Annotation visibility" active className="w-[29px]">
            <Person />
            <circle cx="16" cy="4" r="3" stroke="#fff" />
          </StatusButton>
          <StatusButton label="Auto scale">
            <Person />
            <path d="m17 0-4 5h3l-2 5 5-6h-3z" fill={W} stroke="#3b4453" strokeWidth="0.600" />
          </StatusButton>
          <StatusButton label="Annotation scale">
            <Person />
          </StatusButton>
          <button aria-label="Scale 1:1" className="flex w-[42px] items-center justify-center gap-1">
            1:1
            <Caret className="w-2.5" />
          </button>
        </Group>
        <Group>
          <StatusButton label="Workspace">
            <circle cx="10" cy="10" r="5" strokeWidth="4" />
            <circle cx="10" cy="10" r="8" strokeWidth="4" strokeDasharray="3.100 3.180" />
          </StatusButton>
          <StatusCaret label="Workspace settings" className="w-[18px]" />
        </Group>
        <Group>
          <StatusButton label="Annotation monitor">
            <path d="M10 1v18M1 10h18" strokeWidth="2.200" />
          </StatusButton>
        </Group>
        <Group>
          <StatusButton label="Isolate objects">
            <path d="M1 1h7v7H1zM10 12l-4 7h8z" />
            <circle cx="15" cy="8" r="4" />
          </StatusButton>
        </Group>
        <Group>
          <StatusButton label="Hardware acceleration" className="w-[33px]">
            <circle cx="11" cy="8" r="8" fill="#245c9e" stroke="none" />
            <path d="M4 0l1.500 4L10 5 5.500 6.500 4 11 3 6.500 0 5l3-1z" fill="#cfe6fa" stroke="none" />
            <path d="M0 12h8v7H0z" fill="#f0a92e" stroke="none" />
            <path d="m8 14 4 4 7-9" stroke="#41b257" strokeWidth="3" />
          </StatusButton>
          <StatusButton label="Plot notification" className="w-[34px]">
            <path d="M5 7V1h10v6M2 14V7h16v7" strokeWidth="1.600" />
            <path d="M2 10h16" strokeWidth="2" />
            <path d="M5 13h10v6H5z" fill="#f2b48a" />
          </StatusButton>
        </Group>
        <Group>
          <StatusButton label="Clean screen">
            <path d="M1 2h18v16H1zM11 9l5-5M12 4h4v4M9 11l-5 5M4 12v4h4" />
          </StatusButton>
        </Group>
        <Group>
          <StatusButton label="Customization">
            <path d="M0 3h20M0 10h20M0 17h20" strokeWidth="2" />
          </StatusButton>
        </Group>
      </div>
    </footer>
  );
}

function PlotBalloon() {
  return (
    <div
      role="status"
      className="absolute right-[14px] bottom-12 h-[106px] w-[317px] rounded-[20px] border-2 border-black bg-[#ffffe1] pt-3 pr-2.5 pl-4 text-black"
    >
      <div className="flex items-center">
        <svg viewBox="0 0 20 20" className="-ml-1.5 h-5 w-5">
          <circle cx="10" cy="10" r="9.500" fill="#1d43b8" stroke="#8fa6dd" />
          <path d="M10 4v3M10 9v7" stroke="#fff" strokeWidth="2.500" />
        </svg>
        <h2 className="ml-3.5 flex-1 font-bold whitespace-nowrap">Plot and Publish Job Complete</h2>
        <button aria-label="Dismiss" className="flex h-5 w-5 items-center justify-center border border-[#888] bg-[#f0f0f0]">
          <svg viewBox="0 0 12 12" className="w-3" stroke="#000" strokeWidth="2">
            <path d="m1 1 10 10M11 1 1 11" />
          </svg>
        </button>
      </div>
      <p className="mt-2">No errors or warnings found</p>
      <a href="#details" className="mt-2 block whitespace-nowrap text-[#1a12b4] underline">
        Click to view plot and publish details...
      </a>
      <svg viewBox="0 0 26 27" className="absolute -bottom-[26px] left-[217px] h-[27px] w-[26px]">
        <path d="M1 0v1l24 24V0z" fill="#ffffe1" />
        <path d="M1 2 25 25V1" fill="none" stroke="#000" strokeWidth="1.500" />
      </svg>
    </div>
  );
}

function Watermark() {
  return (
    <div className="pointer-events-none absolute bottom-5 left-[844px] flex w-[230px] flex-col items-center font-bold">
      <p className="font-['DejaVu_Sans',sans-serif] text-[64px] leading-[76px] text-[#b4b4b4]/20" lang="ar" dir="rtl">
        مستقل
      </p>
      <p className="font-['Liberation_Sans',sans-serif] text-[37px] leading-[43px] text-[#b4b4b4]/45">mostaql.com</p>
    </div>
  );
}

export default function App() {
  return (
    <div className="relative flex h-screen flex-col overflow-hidden bg-[#222932] font-['Open_Sans',sans-serif] text-[14px] leading-5">
      <TitleBar />
      <MenuBar />
      <DocumentTabs />
      <Toolbars />
      <Canvas />
      <CommandLine />
      <StatusBar />
      <Watermark />
      <PlotBalloon />
    </div>
  );
}
